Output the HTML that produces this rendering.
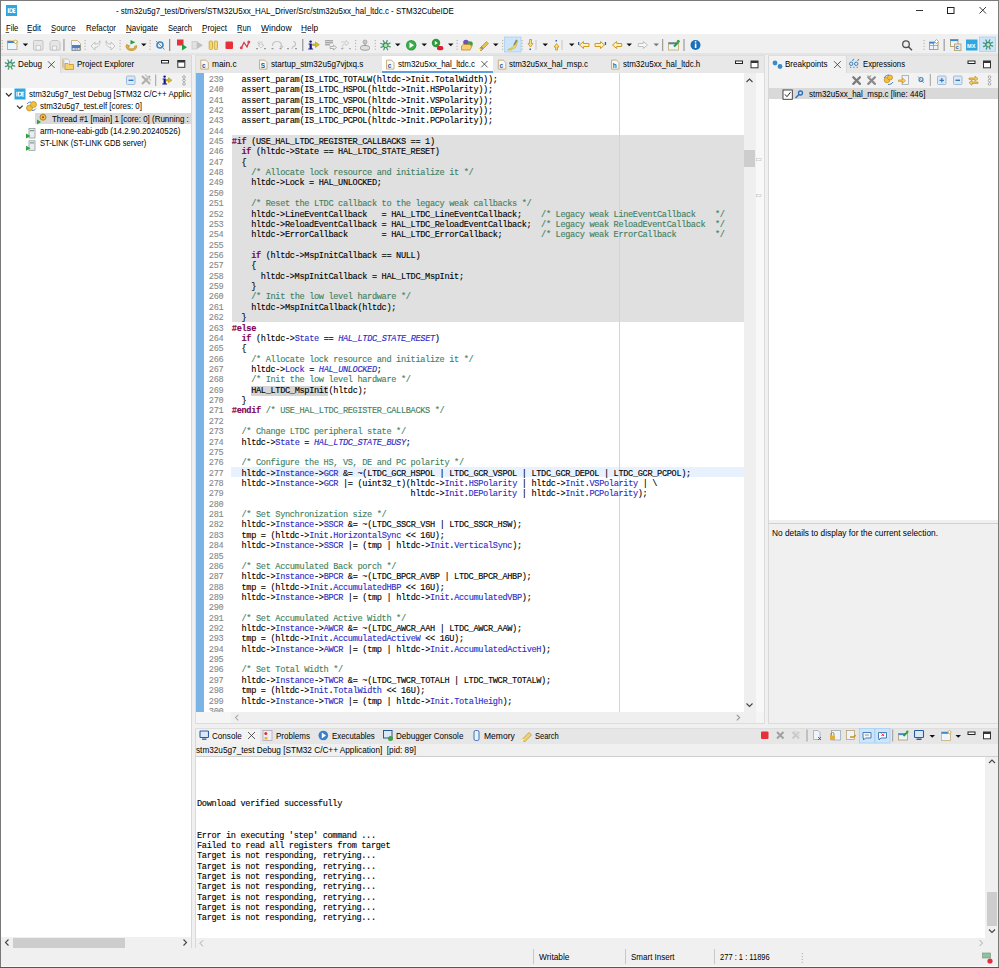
<!DOCTYPE html><html><head><meta charset="utf-8"><style>
html,body{margin:0;padding:0;}
body{width:999px;height:968px;overflow:hidden;position:relative;background:#f0f0f0;font-family:"Liberation Sans",sans-serif;}
.t{position:absolute;white-space:pre;line-height:1;transform-origin:0 0;}
.clip{position:absolute;overflow:hidden;}
.code{position:absolute;white-space:pre;font-family:"Liberation Mono",monospace;font-size:8.6px;letter-spacing:-0.325px;line-height:10.363px;color:#000;-webkit-text-stroke:0.12px currentColor;}
.k{color:#7f0055;font-weight:bold}
.c{color:#3f7f5f}
.f{color:#2c2cc8}
.e{color:#2c2cc8;font-style:italic}
svg.ov{position:absolute;left:0;top:0;}
</style></head><body>

<div style="position:absolute;left:0px;top:0px;width:999px;height:20px;background:#fff;"></div>
<div style="position:absolute;left:0px;top:20px;width:999px;height:13.5px;background:#fff;"></div>
<div style="position:absolute;left:0px;top:33.5px;width:999px;height:19.5px;background:#f0f0f0;"></div>
<div style="position:absolute;left:0px;top:53px;width:999px;height:2px;background:#e4e4e4;"></div>
<div style="position:absolute;left:1px;top:55px;width:191px;height:17.5px;background:#e6e6e6;"></div>
<div style="position:absolute;left:60px;top:55px;width:132px;height:17.5px;background:#e6e6e6;border-left:1px solid #dadada;box-sizing:border-box;"></div>
<div style="position:absolute;left:1px;top:55px;width:59px;height:17.5px;background:#f2f2f2;"></div>
<div style="position:absolute;left:1px;top:72.5px;width:191px;height:15.5px;background:#f2f2f2;"></div>
<div style="position:absolute;left:1px;top:88px;width:190px;height:849px;background:#fff;"></div>
<div style="position:absolute;left:191px;top:55px;width:1px;height:893px;background:#d8d8d8;"></div>
<div style="position:absolute;left:192px;top:55px;width:3px;height:893px;background:#f0f0f0;"></div>
<div style="position:absolute;left:35.2px;top:113.2px;width:155.8px;height:11.1px;background:#d9d9d9;"></div>
<div style="position:absolute;left:1px;top:937.4px;width:190px;height:10.6px;background:#f0f0f0;"></div>
<div style="position:absolute;left:13.2px;top:937.8px;width:112px;height:9.8px;background:#cdcdcd;"></div>
<div style="position:absolute;left:195px;top:55px;width:570px;height:17.5px;background:#e8e8e8;"></div>
<div style="position:absolute;left:381.5px;top:55px;width:111.5px;height:17.5px;background:#fff;"></div>
<div style="position:absolute;left:381.5px;top:70.8px;width:111.5px;height:1.8px;background:#5c9ee0;"></div>
<div style="position:absolute;left:195px;top:72.5px;width:569px;height:639px;background:#fff;"></div>
<div style="position:absolute;left:196px;top:72.5px;width:8px;height:639px;background:#7ab3e6;"></div>
<div class="clip" style="left:195px;top:72.5px;width:549px;height:639px">
<div style="position:absolute;left:36.70000000000002px;top:62.47800000000001px;width:512.1999999999999px;height:186.534px;background:#e0e0e0;"></div>
<div style="position:absolute;left:36.30000000000001px;top:394.094px;width:512.5999999999999px;height:10.363px;background:#e8f2fe;"></div>
<div style="position:absolute;left:424px;top:0.0px;width:1px;height:639px;background:#d4d4d4;"></div>
<div class="code" style="left:13.800000000000011px;top:2.30px;color:#8a8a8a">239</div>
<div class="code" style="left:36.80000000000001px;top:2.30px">  assert_param(IS_LTDC_TOTALW(hltdc-&gt;Init.TotalWidth));</div>
<div class="code" style="left:13.800000000000011px;top:12.66px;color:#8a8a8a">240</div>
<div class="code" style="left:36.80000000000001px;top:12.66px">  assert_param(IS_LTDC_HSPOL(hltdc-&gt;Init.HSPolarity));</div>
<div class="code" style="left:13.800000000000011px;top:23.03px;color:#8a8a8a">241</div>
<div class="code" style="left:36.80000000000001px;top:23.03px">  assert_param(IS_LTDC_VSPOL(hltdc-&gt;Init.VSPolarity));</div>
<div class="code" style="left:13.800000000000011px;top:33.39px;color:#8a8a8a">242</div>
<div class="code" style="left:36.80000000000001px;top:33.39px">  assert_param(IS_LTDC_DEPOL(hltdc-&gt;Init.DEPolarity));</div>
<div class="code" style="left:13.800000000000011px;top:43.75px;color:#8a8a8a">243</div>
<div class="code" style="left:36.80000000000001px;top:43.75px">  assert_param(IS_LTDC_PCPOL(hltdc-&gt;Init.PCPolarity));</div>
<div class="code" style="left:13.800000000000011px;top:54.11px;color:#8a8a8a">244</div>
<div class="code" style="left:13.800000000000011px;top:64.48px;color:#8a8a8a">245</div>
<div class="code" style="left:36.80000000000001px;top:64.48px"><span class="k">#if</span> (USE_HAL_LTDC_REGISTER_CALLBACKS == 1)</div>
<div class="code" style="left:13.800000000000011px;top:74.84px;color:#8a8a8a">246</div>
<div class="code" style="left:36.80000000000001px;top:74.84px">  <span class="k">if</span> (hltdc-&gt;State == HAL_LTDC_STATE_RESET)</div>
<div class="code" style="left:13.800000000000011px;top:85.20px;color:#8a8a8a">247</div>
<div class="code" style="left:36.80000000000001px;top:85.20px">  {</div>
<div class="code" style="left:13.800000000000011px;top:95.57px;color:#8a8a8a">248</div>
<div class="code" style="left:36.80000000000001px;top:95.57px">    <span class="c">/* Allocate lock resource and initialize it */</span></div>
<div class="code" style="left:13.800000000000011px;top:105.93px;color:#8a8a8a">249</div>
<div class="code" style="left:36.80000000000001px;top:105.93px">    hltdc-&gt;Lock = HAL_UNLOCKED;</div>
<div class="code" style="left:13.800000000000011px;top:116.29px;color:#8a8a8a">250</div>
<div class="code" style="left:13.800000000000011px;top:126.66px;color:#8a8a8a">251</div>
<div class="code" style="left:36.80000000000001px;top:126.66px">    <span class="c">/* Reset the LTDC callback to the legacy weak callbacks */</span></div>
<div class="code" style="left:13.800000000000011px;top:137.02px;color:#8a8a8a">252</div>
<div class="code" style="left:36.80000000000001px;top:137.02px">    hltdc-&gt;LineEventCallback   = HAL_LTDC_LineEventCallback;    <span class="c">/* Legacy weak LineEventCallback    */</span></div>
<div class="code" style="left:13.800000000000011px;top:147.38px;color:#8a8a8a">253</div>
<div class="code" style="left:36.80000000000001px;top:147.38px">    hltdc-&gt;ReloadEventCallback = HAL_LTDC_ReloadEventCallback;  <span class="c">/* Legacy weak ReloadEventCallback  */</span></div>
<div class="code" style="left:13.800000000000011px;top:157.74px;color:#8a8a8a">254</div>
<div class="code" style="left:36.80000000000001px;top:157.74px">    hltdc-&gt;ErrorCallback       = HAL_LTDC_ErrorCallback;        <span class="c">/* Legacy weak ErrorCallback        */</span></div>
<div class="code" style="left:13.800000000000011px;top:168.11px;color:#8a8a8a">255</div>
<div class="code" style="left:13.800000000000011px;top:178.47px;color:#8a8a8a">256</div>
<div class="code" style="left:36.80000000000001px;top:178.47px">    <span class="k">if</span> (hltdc-&gt;MspInitCallback == NULL)</div>
<div class="code" style="left:13.800000000000011px;top:188.83px;color:#8a8a8a">257</div>
<div class="code" style="left:36.80000000000001px;top:188.83px">    {</div>
<div class="code" style="left:13.800000000000011px;top:199.20px;color:#8a8a8a">258</div>
<div class="code" style="left:36.80000000000001px;top:199.20px">      hltdc-&gt;MspInitCallback = HAL_LTDC_MspInit;</div>
<div class="code" style="left:13.800000000000011px;top:209.56px;color:#8a8a8a">259</div>
<div class="code" style="left:36.80000000000001px;top:209.56px">    }</div>
<div class="code" style="left:13.800000000000011px;top:219.92px;color:#8a8a8a">260</div>
<div class="code" style="left:36.80000000000001px;top:219.92px">    <span class="c">/* Init the low level hardware */</span></div>
<div class="code" style="left:13.800000000000011px;top:230.29px;color:#8a8a8a">261</div>
<div class="code" style="left:36.80000000000001px;top:230.29px">    hltdc-&gt;MspInitCallback(hltdc);</div>
<div class="code" style="left:13.800000000000011px;top:240.65px;color:#8a8a8a">262</div>
<div class="code" style="left:36.80000000000001px;top:240.65px">  }</div>
<div class="code" style="left:13.800000000000011px;top:251.01px;color:#8a8a8a">263</div>
<div class="code" style="left:36.80000000000001px;top:251.01px"><span class="k">#else</span></div>
<div class="code" style="left:13.800000000000011px;top:261.38px;color:#8a8a8a">264</div>
<div class="code" style="left:36.80000000000001px;top:261.38px">  <span class="k">if</span> (hltdc-&gt;<span class="f">State</span> == <span class="e">HAL_LTDC_STATE_RESET</span>)</div>
<div class="code" style="left:13.800000000000011px;top:271.74px;color:#8a8a8a">265</div>
<div class="code" style="left:36.80000000000001px;top:271.74px">  {</div>
<div class="code" style="left:13.800000000000011px;top:282.10px;color:#8a8a8a">266</div>
<div class="code" style="left:36.80000000000001px;top:282.10px">    <span class="c">/* Allocate lock resource and initialize it */</span></div>
<div class="code" style="left:13.800000000000011px;top:292.46px;color:#8a8a8a">267</div>
<div class="code" style="left:36.80000000000001px;top:292.46px">    hltdc-&gt;<span class="f">Lock</span> = <span class="e">HAL_UNLOCKED</span>;</div>
<div class="code" style="left:13.800000000000011px;top:302.83px;color:#8a8a8a">268</div>
<div class="code" style="left:36.80000000000001px;top:302.83px">    <span class="c">/* Init the low level hardware */</span></div>
<div class="code" style="left:13.800000000000011px;top:313.19px;color:#8a8a8a">269</div>
<div class="code" style="left:36.80000000000001px;top:313.19px">    <span style="background:#d4d4d4">HAL_LTDC_MspInit</span>(hltdc);</div>
<div class="code" style="left:13.800000000000011px;top:323.55px;color:#8a8a8a">270</div>
<div class="code" style="left:36.80000000000001px;top:323.55px">  }</div>
<div class="code" style="left:13.800000000000011px;top:333.92px;color:#8a8a8a">271</div>
<div class="code" style="left:36.80000000000001px;top:333.92px"><span class="k">#endif</span> <span class="c">/* USE_HAL_LTDC_REGISTER_CALLBACKS */</span></div>
<div class="code" style="left:13.800000000000011px;top:344.28px;color:#8a8a8a">272</div>
<div class="code" style="left:13.800000000000011px;top:354.64px;color:#8a8a8a">273</div>
<div class="code" style="left:36.80000000000001px;top:354.64px">  <span class="c">/* Change LTDC peripheral state */</span></div>
<div class="code" style="left:13.800000000000011px;top:365.00px;color:#8a8a8a">274</div>
<div class="code" style="left:36.80000000000001px;top:365.00px">  hltdc-&gt;<span class="f">State</span> = <span class="e">HAL_LTDC_STATE_BUSY</span>;</div>
<div class="code" style="left:13.800000000000011px;top:375.37px;color:#8a8a8a">275</div>
<div class="code" style="left:13.800000000000011px;top:385.73px;color:#8a8a8a">276</div>
<div class="code" style="left:36.80000000000001px;top:385.73px">  <span class="c">/* Configure the HS, VS, DE and PC polarity */</span></div>
<div class="code" style="left:13.800000000000011px;top:396.09px;color:#8a8a8a">277</div>
<div class="code" style="left:36.80000000000001px;top:396.09px">  hltdc-&gt;<span class="f">Instance</span>-&gt;<span class="f">GCR</span> &amp;= ~(LTDC_GCR_HSPOL | LTDC_GCR_VSPOL | LTDC_GCR_DEPOL | LTDC_GCR_PCPOL);</div>
<div class="code" style="left:13.800000000000011px;top:406.46px;color:#8a8a8a">278</div>
<div class="code" style="left:36.80000000000001px;top:406.46px">  hltdc-&gt;<span class="f">Instance</span>-&gt;<span class="f">GCR</span> |= (uint32_t)(hltdc-&gt;<span class="f">Init</span>.<span class="f">HSPolarity</span> | hltdc-&gt;<span class="f">Init</span>.<span class="f">VSPolarity</span> | \</div>
<div class="code" style="left:13.800000000000011px;top:416.82px;color:#8a8a8a">279</div>
<div class="code" style="left:36.80000000000001px;top:416.82px">                                     hltdc-&gt;<span class="f">Init</span>.<span class="f">DEPolarity</span> | hltdc-&gt;<span class="f">Init</span>.<span class="f">PCPolarity</span>);</div>
<div class="code" style="left:13.800000000000011px;top:427.18px;color:#8a8a8a">280</div>
<div class="code" style="left:13.800000000000011px;top:437.55px;color:#8a8a8a">281</div>
<div class="code" style="left:36.80000000000001px;top:437.55px">  <span class="c">/* Set Synchronization size */</span></div>
<div class="code" style="left:13.800000000000011px;top:447.91px;color:#8a8a8a">282</div>
<div class="code" style="left:36.80000000000001px;top:447.91px">  hltdc-&gt;<span class="f">Instance</span>-&gt;<span class="f">SSCR</span> &amp;= ~(LTDC_SSCR_VSH | LTDC_SSCR_HSW);</div>
<div class="code" style="left:13.800000000000011px;top:458.27px;color:#8a8a8a">283</div>
<div class="code" style="left:36.80000000000001px;top:458.27px">  tmp = (hltdc-&gt;<span class="f">Init</span>.<span class="f">HorizontalSync</span> &lt;&lt; 16U);</div>
<div class="code" style="left:13.800000000000011px;top:468.63px;color:#8a8a8a">284</div>
<div class="code" style="left:36.80000000000001px;top:468.63px">  hltdc-&gt;<span class="f">Instance</span>-&gt;<span class="f">SSCR</span> |= (tmp | hltdc-&gt;<span class="f">Init</span>.<span class="f">VerticalSync</span>);</div>
<div class="code" style="left:13.800000000000011px;top:479.00px;color:#8a8a8a">285</div>
<div class="code" style="left:13.800000000000011px;top:489.36px;color:#8a8a8a">286</div>
<div class="code" style="left:36.80000000000001px;top:489.36px">  <span class="c">/* Set Accumulated Back porch */</span></div>
<div class="code" style="left:13.800000000000011px;top:499.72px;color:#8a8a8a">287</div>
<div class="code" style="left:36.80000000000001px;top:499.72px">  hltdc-&gt;<span class="f">Instance</span>-&gt;<span class="f">BPCR</span> &amp;= ~(LTDC_BPCR_AVBP | LTDC_BPCR_AHBP);</div>
<div class="code" style="left:13.800000000000011px;top:510.09px;color:#8a8a8a">288</div>
<div class="code" style="left:36.80000000000001px;top:510.09px">  tmp = (hltdc-&gt;<span class="f">Init</span>.<span class="f">AccumulatedHBP</span> &lt;&lt; 16U);</div>
<div class="code" style="left:13.800000000000011px;top:520.45px;color:#8a8a8a">289</div>
<div class="code" style="left:36.80000000000001px;top:520.45px">  hltdc-&gt;<span class="f">Instance</span>-&gt;<span class="f">BPCR</span> |= (tmp | hltdc-&gt;<span class="f">Init</span>.<span class="f">AccumulatedVBP</span>);</div>
<div class="code" style="left:13.800000000000011px;top:530.81px;color:#8a8a8a">290</div>
<div class="code" style="left:13.800000000000011px;top:541.18px;color:#8a8a8a">291</div>
<div class="code" style="left:36.80000000000001px;top:541.18px">  <span class="c">/* Set Accumulated Active Width */</span></div>
<div class="code" style="left:13.800000000000011px;top:551.54px;color:#8a8a8a">292</div>
<div class="code" style="left:36.80000000000001px;top:551.54px">  hltdc-&gt;<span class="f">Instance</span>-&gt;<span class="f">AWCR</span> &amp;= ~(LTDC_AWCR_AAH | LTDC_AWCR_AAW);</div>
<div class="code" style="left:13.800000000000011px;top:561.90px;color:#8a8a8a">293</div>
<div class="code" style="left:36.80000000000001px;top:561.90px">  tmp = (hltdc-&gt;<span class="f">Init</span>.<span class="f">AccumulatedActiveW</span> &lt;&lt; 16U);</div>
<div class="code" style="left:13.800000000000011px;top:572.26px;color:#8a8a8a">294</div>
<div class="code" style="left:36.80000000000001px;top:572.26px">  hltdc-&gt;<span class="f">Instance</span>-&gt;<span class="f">AWCR</span> |= (tmp | hltdc-&gt;<span class="f">Init</span>.<span class="f">AccumulatedActiveH</span>);</div>
<div class="code" style="left:13.800000000000011px;top:582.63px;color:#8a8a8a">295</div>
<div class="code" style="left:13.800000000000011px;top:592.99px;color:#8a8a8a">296</div>
<div class="code" style="left:36.80000000000001px;top:592.99px">  <span class="c">/* Set Total Width */</span></div>
<div class="code" style="left:13.800000000000011px;top:603.35px;color:#8a8a8a">297</div>
<div class="code" style="left:36.80000000000001px;top:603.35px">  hltdc-&gt;<span class="f">Instance</span>-&gt;<span class="f">TWCR</span> &amp;= ~(LTDC_TWCR_TOTALH | LTDC_TWCR_TOTALW);</div>
<div class="code" style="left:13.800000000000011px;top:613.72px;color:#8a8a8a">298</div>
<div class="code" style="left:36.80000000000001px;top:613.72px">  tmp = (hltdc-&gt;<span class="f">Init</span>.<span class="f">TotalWidth</span> &lt;&lt; 16U);</div>
<div class="code" style="left:13.800000000000011px;top:624.08px;color:#8a8a8a">299</div>
<div class="code" style="left:36.80000000000001px;top:624.08px">  hltdc-&gt;<span class="f">Instance</span>-&gt;<span class="f">TWCR</span> |= (tmp | hltdc-&gt;<span class="f">Init</span>.<span class="f">TotalHeigh</span>);</div>
<div class="code" style="left:13.800000000000011px;top:634.44px;color:#8a8a8a">300</div>
</div>
<div style="position:absolute;left:744px;top:72.5px;width:11.6px;height:639px;background:#efefef;"></div>
<div style="position:absolute;left:755.6px;top:72.5px;width:8.6px;height:639px;background:#f8f8f8;"></div>
<div style="position:absolute;left:744.3px;top:150.3px;width:10.8px;height:17px;background:#cdcdcd;"></div>
<div style="position:absolute;left:764.2px;top:55px;width:1px;height:668px;background:#dcdcdc;"></div>
<div style="position:absolute;left:195px;top:711.5px;width:569px;height:11.5px;background:#f5f5f5;"></div>
<div style="position:absolute;left:230.5px;top:711.5px;width:525px;height:11.5px;background:#efefef;"></div>
<div style="position:absolute;left:195px;top:723px;width:570px;height:1px;background:#dcdcdc;"></div>
<div style="position:absolute;left:765.2px;top:55px;width:3px;height:668px;background:#f0f0f0;"></div>
<div style="position:absolute;left:768.3px;top:55px;width:229.7px;height:17.5px;background:#e6e6e6;"></div>
<div style="position:absolute;left:846px;top:55px;width:152px;height:17.5px;background:#e6e6e6;border-left:1px solid #dadada;box-sizing:border-box;"></div>
<div style="position:absolute;left:768.3px;top:55px;width:77.7px;height:17.5px;background:#f2f2f2;"></div>
<div style="position:absolute;left:768.3px;top:72.5px;width:229.7px;height:15.7px;background:#f2f2f2;"></div>
<div style="position:absolute;left:768.3px;top:88.2px;width:229.7px;height:432px;background:#fff;"></div>
<div style="position:absolute;left:768.3px;top:88.2px;width:229.7px;height:10.8px;background:#d9d9d9;"></div>
<div style="position:absolute;left:768.3px;top:523px;width:229.7px;height:1px;background:#d0d0d0;"></div>
<div style="position:absolute;left:768.3px;top:524px;width:229.7px;height:199px;background:#f0f0f0;"></div>
<div style="position:absolute;left:768px;top:55px;width:1px;height:669px;background:#d8d8d8;"></div>
<div style="position:absolute;left:768px;top:723px;width:230px;height:1px;background:#dcdcdc;"></div>
<div style="position:absolute;left:195px;top:727.7px;width:803px;height:16.2px;background:#e6e6e6;"></div>
<div style="position:absolute;left:195px;top:727.7px;width:65px;height:16.2px;background:#f2f2f2;"></div>
<div style="position:absolute;left:195px;top:743.9px;width:803px;height:11.7px;background:#f0f0f0;"></div>
<div style="position:absolute;left:195px;top:755.6px;width:803px;height:1px;background:#cfcfcf;"></div>
<div style="position:absolute;left:195px;top:756.6px;width:790px;height:181px;background:#fff;"></div>
<div style="position:absolute;left:985px;top:756.6px;width:12px;height:181px;background:#f0f0f0;"></div>
<div style="position:absolute;left:986.7px;top:892.3px;width:10.5px;height:33.4px;background:#cdcdcd;"></div>
<div style="position:absolute;left:195px;top:937.7px;width:803px;height:10.3px;background:#f0f0f0;"></div>
<div class="code" style="left:197px;top:799.45px">Download verified successfully</div>
<div class="code" style="left:197px;top:830.54px">Error in executing &#x27;step&#x27; command ...</div>
<div class="code" style="left:197px;top:840.90px">Failed to read all registers from target</div>
<div class="code" style="left:197px;top:851.27px">Target is not responding, retrying...</div>
<div class="code" style="left:197px;top:861.63px">Target is not responding, retrying...</div>
<div class="code" style="left:197px;top:871.99px">Target is not responding, retrying...</div>
<div class="code" style="left:197px;top:882.36px">Target is not responding, retrying...</div>
<div class="code" style="left:197px;top:892.72px">Target is not responding, retrying...</div>
<div class="code" style="left:197px;top:903.08px">Target is not responding, retrying...</div>
<div class="code" style="left:197px;top:913.44px">Target is not responding, retrying...</div>
<div style="position:absolute;left:195px;top:727.7px;width:1px;height:220.3px;background:#d8d8d8;"></div>
<div style="position:absolute;left:195px;top:55px;width:1px;height:668px;background:#dedede;"></div>
<div style="position:absolute;left:1px;top:55px;width:191px;height:1px;background:#dedede;"></div>
<div style="position:absolute;left:195px;top:55px;width:570px;height:1px;background:#dedede;"></div>
<div style="position:absolute;left:768px;top:55px;width:230px;height:1px;background:#dedede;"></div>
<div style="position:absolute;left:195px;top:727.5px;width:803px;height:1px;background:#dedede;"></div>
<div style="position:absolute;left:1px;top:948px;width:997px;height:18px;background:#f0f0f0;"></div>
<div style="position:absolute;left:533px;top:949px;width:1px;height:15px;background:#c8c8c8;"></div>
<div style="position:absolute;left:625px;top:949px;width:1px;height:15px;background:#c8c8c8;"></div>
<div style="position:absolute;left:714.2px;top:949px;width:1px;height:15px;background:#c8c8c8;"></div>
<div class="t" style="left:115.70px;top:7.42px;font-size:8.6px;color:#000;transform:scaleX(0.9245);">- stm32u5g7_test/Drivers/STM32U5xx_HAL_Driver/Src/stm32u5xx_hal_ltdc.c - STM32CubeIDE</div>
<div class="t" style="left:5.60px;top:23.76px;font-size:8.8px;color:#000;transform:scaleX(0.8740);">File</div>
<div class="t" style="left:27.40px;top:23.76px;font-size:8.8px;color:#000;transform:scaleX(0.9294);">Edit</div>
<div class="t" style="left:51.30px;top:23.76px;font-size:8.8px;color:#000;transform:scaleX(0.8861);">Source</div>
<div class="t" style="left:86.00px;top:23.76px;font-size:8.8px;color:#000;transform:scaleX(0.9023);">Refactor</div>
<div class="t" style="left:126.00px;top:23.76px;font-size:8.8px;color:#000;transform:scaleX(0.9213);">Navigate</div>
<div class="t" style="left:168.00px;top:23.76px;font-size:8.8px;color:#000;transform:scaleX(0.8610);">Search</div>
<div class="t" style="left:201.90px;top:23.76px;font-size:8.8px;color:#000;transform:scaleX(0.9164);">Project</div>
<div class="t" style="left:237.40px;top:23.76px;font-size:8.8px;color:#000;transform:scaleX(0.8612);">Run</div>
<div class="t" style="left:261.20px;top:23.76px;font-size:8.8px;color:#000;transform:scaleX(0.9777);">Window</div>
<div class="t" style="left:301.40px;top:23.76px;font-size:8.8px;color:#000;transform:scaleX(0.9451);">Help</div>
<div class="t" style="left:17.60px;top:60.26px;font-size:8.8px;color:#000;transform:scaleX(0.9292);">Debug</div>
<div class="t" style="left:76.70px;top:60.26px;font-size:8.8px;color:#000;transform:scaleX(0.9154);">Project Explorer</div>
<div class="clip" style="left:1px;top:88px;width:190px;height:849px"><div class="t" style="left:27.70px;top:1.76px;font-size:8.8px;color:#000;transform:scaleX(0.9050);">stm32u5g7_test Debug [STM32 C/C++ Application]</div></div>
<div class="t" style="left:40.30px;top:102.16px;font-size:8.8px;color:#000;transform:scaleX(0.9029);">stm32u5g7_test.elf [cores: 0]</div>
<div class="clip" style="left:1px;top:88px;width:190px;height:849px"><div class="t" style="left:50.90px;top:26.56px;font-size:8.8px;color:#000;transform:scaleX(0.9050);">Thread #1 [main] 1 [core: 0] (Running : Step)</div></div>
<div class="t" style="left:40.30px;top:126.96px;font-size:8.8px;color:#000;transform:scaleX(0.9107);">arm-none-eabi-gdb (14.2.90.20240526)</div>
<div class="t" style="left:40.30px;top:139.36px;font-size:8.8px;color:#000;transform:scaleX(0.8629);">ST-LINK (ST-LINK GDB server)</div>
<div class="t" style="left:212.00px;top:60.26px;font-size:8.8px;color:#000;transform:scaleX(0.9490);">main.c</div>
<div class="t" style="left:270.60px;top:60.26px;font-size:8.8px;color:#000;transform:scaleX(0.9217);">startup_stm32u5g7vjtxq.s</div>
<div class="t" style="left:397.70px;top:60.26px;font-size:8.8px;color:#000;transform:scaleX(0.9102);">stm32u5xx_hal_ltdc.c</div>
<div class="t" style="left:509.00px;top:60.26px;font-size:8.8px;color:#000;transform:scaleX(0.9025);">stm32u5xx_hal_msp.c</div>
<div class="t" style="left:623.00px;top:60.26px;font-size:8.8px;color:#000;transform:scaleX(0.9084);">stm32u5xx_hal_ltdc.h</div>
<div class="t" style="left:785.30px;top:60.16px;font-size:8.8px;color:#000;transform:scaleX(0.9146);">Breakpoints</div>
<div class="t" style="left:862.60px;top:60.16px;font-size:8.8px;color:#000;transform:scaleX(0.8764);">Expressions</div>
<div class="t" style="left:808.80px;top:89.76px;font-size:8.8px;color:#000;transform:scaleX(0.9093);">stm32u5xx_hal_msp.c [line: 446]</div>
<div class="t" style="left:772.00px;top:529.46px;font-size:8.8px;color:#000;transform:scaleX(0.9456);">No details to display for the current selection.</div>
<div class="t" style="left:212.10px;top:731.96px;font-size:8.8px;color:#000;transform:scaleX(0.9200);">Console</div>
<div class="t" style="left:276.40px;top:731.96px;font-size:8.8px;color:#000;transform:scaleX(0.9124);">Problems</div>
<div class="t" style="left:331.60px;top:731.96px;font-size:8.8px;color:#000;transform:scaleX(0.8928);">Executables</div>
<div class="t" style="left:395.60px;top:731.96px;font-size:8.8px;color:#000;transform:scaleX(0.9188);">Debugger Console</div>
<div class="t" style="left:483.60px;top:731.96px;font-size:8.8px;color:#000;transform:scaleX(0.9691);">Memory</div>
<div class="t" style="left:534.60px;top:731.96px;font-size:8.8px;color:#000;transform:scaleX(0.8538);">Search</div>
<div class="t" style="left:196.00px;top:745.86px;font-size:8.8px;color:#000;transform:scaleX(0.9334);">stm32u5g7_test Debug [STM32 C/C++ Application]  [pid: 89]</div>
<div class="t" style="left:538.50px;top:952.76px;font-size:8.8px;color:#000;transform:scaleX(0.9499);">Writable</div>
<div class="t" style="left:631.20px;top:952.76px;font-size:8.8px;color:#000;transform:scaleX(0.9101);">Smart Insert</div>
<div class="t" style="left:719.70px;top:952.76px;font-size:8.8px;color:#000;transform:scaleX(0.8562);">277 : 1 : 11896</div>
<svg class="ov" width="999" height="968" viewBox="0 0 999 968"><path d="M916 10.5H923" stroke="#333" stroke-width="1"/><rect x="947.5" y="7.5" width="6.5" height="6" fill="none" stroke="#222" stroke-width="1"/><path d="M979.5 7L986 13.5M986 7L979.5 13.5" stroke="#222" stroke-width="0.9"/><rect x="6" y="5" width="11" height="11" fill="#2ea7e0"/><rect x="7.8" y="8.2" width="1.1" height="4.8" fill="#fff"/><path d="M9.9 8.75h1.3a1.85 1.85 0 0 1 0 3.6999999999999997h-1.3z" fill="none" stroke="#fff" stroke-width="1.1"/><path d="M15.6 8.75h-2.2v3.6999999999999997h2.2M13.4 10.6h1.9" fill="none" stroke="#fff" stroke-width="1.05"/><rect x="5.6" y="32" width="3.5" height="0.8" fill="#333"/><rect x="27.4" y="32" width="4" height="0.8" fill="#333"/><rect x="51.3" y="32" width="4" height="0.8" fill="#333"/><rect x="126" y="32" width="5" height="0.8" fill="#333"/><rect x="176" y="32" width="3.5" height="0.8" fill="#333"/><rect x="201.9" y="32" width="4.5" height="0.8" fill="#333"/><rect x="237.4" y="32" width="4.5" height="0.8" fill="#333"/><rect x="261.2" y="32" width="6.5" height="0.8" fill="#333"/><rect x="301.4" y="32" width="4.5" height="0.8" fill="#333"/><rect x="108" y="32" width="3" height="0.8" fill="#333"/><rect x="1.7000000000000002" y="40.0" width="1.2" height="1.1" fill="#b8a48a" opacity="0.8"/><rect x="1.7000000000000002" y="42.9" width="1.2" height="1.1" fill="#b8a48a" opacity="0.8"/><rect x="1.7000000000000002" y="45.8" width="1.2" height="1.1" fill="#b8a48a" opacity="0.8"/><rect x="1.7000000000000002" y="48.7" width="1.2" height="1.1" fill="#b8a48a" opacity="0.8"/><rect x="7.5" y="41" width="9.5" height="8.5" fill="#eef6fc" stroke="#c8b070" stroke-width="1"/><rect x="7.5" y="41" width="8" height="2" fill="#3d86d0"/><path d="M15.5 39.8l2 2l-2 2l-2-2z" fill="#fff" stroke="#c09a30" stroke-width="0.9"/><path d="M22.7 43.5h5.5l-2.75 2.7z" fill="#111"/><rect x="33.5" y="40.5" width="9.5" height="9.5" rx="1" fill="#e6e6e6" stroke="#c4c4c4" stroke-width="1"/><rect x="36" y="45.5" width="4.5" height="4.5" fill="#f4f4f4" stroke="#c4c4c4" stroke-width="0.8"/><path d="M50 42.5l2-2h6l2 2v7.5h-10z" fill="#e6e6e6" stroke="#c4c4c4" stroke-width="1"/><rect x="52.5" y="46" width="4" height="4" fill="#f4f4f4" stroke="#c4c4c4" stroke-width="0.8"/><rect x="63.2" y="39" width="1.5" height="12" fill="#b0b0b0"/><path d="M71.5 40.5h6l3 3v7h-9z" fill="#f4f8fc" stroke="#c8b070" stroke-width="0.9"/><rect x="72" y="45" width="8.5" height="5.5" fill="#4f7fc0"/><text x="72.2" y="49.6" font-family="Liberation Mono" font-size="4.2" font-weight="bold" fill="#fff">010</text><rect x="84.5" y="40.0" width="1.2" height="1.1" fill="#b8a48a" opacity="0.8"/><rect x="84.5" y="42.9" width="1.2" height="1.1" fill="#b8a48a" opacity="0.8"/><rect x="84.5" y="45.8" width="1.2" height="1.1" fill="#b8a48a" opacity="0.8"/><rect x="84.5" y="48.7" width="1.2" height="1.1" fill="#b8a48a" opacity="0.8"/><path d="M91 46l4-4v2.2c2.5 0 4.5-1 4.8-3.5c0.8 3.5-1.5 6.8-4.8 6.8v2.5z" fill="#f4f4f4" stroke="#bcbcbc" stroke-width="0.9"/><path d="M115 46l-4-4v2.2c-2.5 0-4.5-1-4.8-3.5c-0.8 3.5 1.5 6.8 4.8 6.8v2.5z" fill="#f4f4f4" stroke="#bcbcbc" stroke-width="0.9"/><rect x="119.5" y="40.0" width="1.2" height="1.1" fill="#b8a48a" opacity="0.8"/><rect x="119.5" y="42.9" width="1.2" height="1.1" fill="#b8a48a" opacity="0.8"/><rect x="119.5" y="45.8" width="1.2" height="1.1" fill="#b8a48a" opacity="0.8"/><rect x="119.5" y="48.7" width="1.2" height="1.1" fill="#b8a48a" opacity="0.8"/><path d="M126 46.5c0.5 3 3 4.2 6 4c3.5-0.3 5.2-2.5 4.5-5l-2 1c0.3 1.5-1 2.3-2.8 2.3c-2 0-3-0.8-3.2-2.3l1.2-0.5l-3-1.5z" fill="#e0b040" stroke="#b88a20" stroke-width="0.7"/><path d="M130.5 40v4.5l4.8-2.25z" fill="#20a040"/><path d="M141 43.5h5.5l-2.75 2.7z" fill="#111"/><rect x="149.5" y="40.0" width="1.2" height="1.1" fill="#b8a48a" opacity="0.8"/><rect x="149.5" y="42.9" width="1.2" height="1.1" fill="#b8a48a" opacity="0.8"/><rect x="149.5" y="45.8" width="1.2" height="1.1" fill="#b8a48a" opacity="0.8"/><rect x="149.5" y="48.7" width="1.2" height="1.1" fill="#b8a48a" opacity="0.8"/><circle cx="160" cy="45" r="3" fill="none" stroke="#3a88c8" stroke-width="1.6"/><path d="M156 41L164.5 49.5" stroke="#888" stroke-width="1"/><rect x="169.2" y="39" width="1" height="12" fill="#777"/><rect x="177" y="39.5" width="6.5" height="6" fill="#e8303a"/><path d="M182 44v6.5l5-3.25z" fill="#20a040"/><rect x="192" y="41.5" width="5" height="7.5" fill="#e2e2e2" stroke="#c8c8c8" stroke-width="0.8"/><path d="M197 41.5v7.5l6-3.75z" fill="#c0c0c0"/><rect x="209.2" y="41" width="3.3" height="8.5" rx="1" fill="#f3d878" stroke="#c9a030" stroke-width="0.8"/><rect x="214.2" y="41" width="3.3" height="8.5" rx="1" fill="#f3d878" stroke="#c9a030" stroke-width="0.8"/><rect x="225.5" y="41.5" width="7.5" height="7.5" rx="1" fill="#e8303a"/><path d="M241.5 47.5L244 42.5L247 47L248.8 42.2" fill="none" stroke="#d83040" stroke-width="1.2"/><circle cx="241.3" cy="47.8" r="1.5" fill="#e84050"/><circle cx="248.8" cy="42" r="1.5" fill="#e84050"/><rect x="256" y="48.3" width="2" height="0.9" fill="#7a7a7a"/><rect x="264" y="48.3" width="2" height="0.9" fill="#7a7a7a"/><rect x="271.5" y="48.3" width="2" height="0.9" fill="#7a7a7a"/><rect x="279.5" y="48.3" width="2" height="0.9" fill="#7a7a7a"/><rect x="287" y="48.3" width="2" height="0.9" fill="#7a7a7a"/><rect x="295" y="48.3" width="2" height="0.9" fill="#7a7a7a"/><path d="M258 42h4v3h2l-3 3l-3-3h2v-1.5h-2z" fill="#f2f2f2" stroke="#c4c4c4" stroke-width="0.8"/><path d="M272.5 46c0-3 2-4.5 4.5-4.5s4.5 1.5 4.5 4.5M280 46l1.5 1.8l1.5-1.8" fill="none" stroke="#c4c4c4" stroke-width="1.2"/><path d="M293 41.5a2.5 2.5 0 1 1 0 5l-1.5 2.5" fill="none" stroke="#c4c4c4" stroke-width="1.2"/><rect x="302.3" y="39" width="1" height="12" fill="#808080"/><circle cx="310.6" cy="41.6" r="1.2" fill="#14148c"/><path d="M308.6 43.6h3.2v5h1.3v1h-4.8v-1h1.3v-4h-1z" fill="#14148c"/><path d="M312.5 44h3v-2l3.8 2.7l-3.8 2.7v-2h-3z" fill="#d8c020" stroke="#a08010" stroke-width="0.5"/><rect x="325" y="40.3" width="8" height="1" fill="#8a8a8a"/><rect x="325" y="42.3" width="8" height="1" fill="#8a8a8a"/><rect x="325" y="44.3" width="5" height="1" fill="#8a8a8a"/><path d="M330 46.5h3.5v-1.5l3 2.5l-3 2.5v-1.5h-3.5z" fill="#f2f2f2" stroke="#a0a0a0" stroke-width="0.8"/><path d="M341 42h5v-1.5l3 2.5l-3 2.5v-1.5h-2l-2 2.5l2 2.5" fill="none" stroke="#c8c8c8" stroke-width="0.9"/><rect x="341" y="48.3" width="2" height="0.9" fill="#9a9a9a"/><rect x="349" y="48.3" width="2" height="0.9" fill="#9a9a9a"/><rect x="355.0" y="40.0" width="1.2" height="1.1" fill="#b8a48a" opacity="0.8"/><rect x="355.0" y="42.9" width="1.2" height="1.1" fill="#b8a48a" opacity="0.8"/><rect x="355.0" y="45.8" width="1.2" height="1.1" fill="#b8a48a" opacity="0.8"/><rect x="355.0" y="48.7" width="1.2" height="1.1" fill="#b8a48a" opacity="0.8"/><circle cx="365" cy="42" r="2" fill="#c8c8c8" stroke="#9a9a9a" stroke-width="0.7"/><path d="M365 44v3" stroke="#9a9a9a" stroke-width="1.2"/><path d="M360.5 47.5c0-1.5 2-2 4.5-2s4.5 0.5 4.5 2v1.2c0 1-2 1.5-4.5 1.5s-4.5-0.5-4.5-1.5z" fill="#e0e0e0" stroke="#8a8a8a" stroke-width="0.8"/><rect x="374.7" y="40.0" width="1.2" height="1.1" fill="#b8a48a" opacity="0.8"/><rect x="374.7" y="42.9" width="1.2" height="1.1" fill="#b8a48a" opacity="0.8"/><rect x="374.7" y="45.8" width="1.2" height="1.1" fill="#b8a48a" opacity="0.8"/><rect x="374.7" y="48.7" width="1.2" height="1.1" fill="#b8a48a" opacity="0.8"/><path d="M387.38 45.89L390.20 46.91M386.34 47.01L387.61 49.73M384.81 47.08L383.79 49.90M383.69 46.04L380.97 47.31M383.62 44.51L380.80 43.49M384.66 43.39L383.39 40.67M386.19 43.32L387.21 40.50M387.31 44.36L390.03 43.09" stroke="#4a9a7a" stroke-width="1.3" stroke-linecap="round"/><circle cx="385.5" cy="45.2" r="2.75" fill="#3a8c88"/><circle cx="385.7" cy="45.400000000000006" r="1.7000000000000002" fill="#c8e890"/><path d="M395 43.5h5.5l-2.75 2.7z" fill="#111"/><circle cx="411.2" cy="45.2" r="5.2" fill="#2e9a3e"/><circle cx="411.2" cy="45.2" r="4.2" fill="#3cac4a"/><path d="M409.5 42.3v6l4.5-3z" fill="#fff"/><path d="M421.5 43.5h5.5l-2.75 2.7z" fill="#111"/><circle cx="436" cy="43" r="4.2" fill="#2e9a3e"/><path d="M434.8 41v4l3-2z" fill="#fff"/><rect x="437" y="46" width="6.3" height="4.2" rx="1.8" fill="#e02030"/><path d="M448 43.5h5.5l-2.75 2.7z" fill="#111"/><rect x="456.5" y="40.0" width="1.2" height="1.1" fill="#b8a48a" opacity="0.8"/><rect x="456.5" y="42.9" width="1.2" height="1.1" fill="#b8a48a" opacity="0.8"/><rect x="456.5" y="45.8" width="1.2" height="1.1" fill="#b8a48a" opacity="0.8"/><rect x="456.5" y="48.7" width="1.2" height="1.1" fill="#b8a48a" opacity="0.8"/><circle cx="466" cy="42.5" r="2.8" fill="#7050c0"/><circle cx="470" cy="44" r="2.8" fill="#40a040"/><path d="M461.5 46l2-1.5h6l2.5 1.5l-2 4h-8.5z" fill="#f5cf70" stroke="#c08a30" stroke-width="0.8"/><path d="M479 49l7.5-7.5l2 2l-7.5 7.5z" fill="#e8c050" stroke="#b89030" stroke-width="0.7"/><path d="M481 47l2 2" stroke="#9090a0" stroke-width="2"/><path d="M478 50.5l1.8-1.8" stroke="#fff8a0" stroke-width="2"/><path d="M493 43.5h5.5l-2.75 2.7z" fill="#111"/><rect x="502.0" y="40.0" width="1.2" height="1.1" fill="#b8a48a" opacity="0.8"/><rect x="502.0" y="42.9" width="1.2" height="1.1" fill="#b8a48a" opacity="0.8"/><rect x="502.0" y="45.8" width="1.2" height="1.1" fill="#b8a48a" opacity="0.8"/><rect x="502.0" y="48.7" width="1.2" height="1.1" fill="#b8a48a" opacity="0.8"/><rect x="504.5" y="37" width="16.5" height="15" fill="#cde5f8" stroke="#a8d0f0" stroke-width="0.8"/><rect x="521.5" y="40.0" width="1.2" height="1.1" fill="#b8a48a" opacity="0.8"/><rect x="521.5" y="42.9" width="1.2" height="1.1" fill="#b8a48a" opacity="0.8"/><rect x="521.5" y="45.8" width="1.2" height="1.1" fill="#b8a48a" opacity="0.8"/><rect x="521.5" y="48.7" width="1.2" height="1.1" fill="#b8a48a" opacity="0.8"/><path d="M508 49.5c2-0.5 4-1.5 5.5-3.5l2.5-6l1.5 0.8l-1.5 6c-1.5 2-4 2.7-8 2.7z" fill="#f4d850" stroke="#c0a020" stroke-width="0.5"/><path d="M514 45l3-5" stroke="#8a8a80" stroke-width="1.6"/><path d="M507 50h5" stroke="#e8c840" stroke-width="0.8"/><path d="M528 43.5h1.5v-4h2v4h1.5l-2.5 3.5z" fill="#f8e080" stroke="#c89020" stroke-width="0.8"/><rect x="529.5" y="48.5" width="1.5" height="1.5" fill="#3060b0"/><rect x="535" y="40" width="2" height="10" fill="#d8dce0"/><path d="M542.5 43.5h5.5l-2.75 2.7z" fill="#111"/><path d="M554 47h1.5v3h2v-3h1.5l-2.5-3.5z" fill="#f8e080" stroke="#c89020" stroke-width="0.8"/><rect x="555.5" y="40" width="1.5" height="1.5" fill="#3060b0"/><rect x="561" y="40" width="2" height="10" fill="#d8dce0"/><path d="M569 43.5h5.5l-2.75 2.7z" fill="#111"/><path d="M579.5 45l4-3.5v2h5.5v3h-5.5v2z" fill="#fff4c0" stroke="#d09a20" stroke-width="1"/><rect x="578" y="42" width="1.3" height="3" fill="#3a5a9a"/><path d="M604.5 45l-4-3.5v2h-5.5v3h5.5v2z" fill="#fff4c0" stroke="#d09a20" stroke-width="1"/><rect x="604.8" y="42" width="1.3" height="3" fill="#3a5a9a"/><path d="M612.5 45l4.2-3.5v2h5v3h-5v2z" fill="#fff4c0" stroke="#d09a20" stroke-width="1"/><path d="M626.5 43.5h5.5l-2.75 2.7z" fill="#111"/><path d="M647.5 45l-4.2-3.5v2h-5v3h5v2z" fill="#f8f8f8" stroke="#c0c0c0" stroke-width="1"/><path d="M653.5 43.5h5.5l-2.75 2.7z" fill="#777"/><rect x="662.2" y="39" width="1" height="12" fill="#8a8a8a"/><rect x="668.5" y="42.5" width="10" height="7.5" fill="#eef6fc" stroke="#c8b070" stroke-width="0.9"/><rect x="668.5" y="42.5" width="8" height="1.8" fill="#3d86d0"/><path d="M674 46.5l4-4" stroke="#2a9a40" stroke-width="2"/><circle cx="678.3" cy="41.3" r="1.5" fill="#30a848"/><rect x="683.5" y="39" width="1" height="12" fill="#8a8a8a"/><circle cx="695.5" cy="45" r="5" fill="#1a6fb8"/><rect x="694.8" y="43.5" width="1.6" height="4.5" fill="#fff"/><circle cx="695.6" cy="41.8" r="0.9" fill="#fff"/><circle cx="906" cy="44.2" r="3.3" fill="none" stroke="#505050" stroke-width="1.3"/><path d="M908.5 46.8L912 50.3" stroke="#505050" stroke-width="1.5"/><rect x="923.5" y="40.0" width="1.2" height="1.1" fill="#b8a48a" opacity="0.8"/><rect x="923.5" y="42.9" width="1.2" height="1.1" fill="#b8a48a" opacity="0.8"/><rect x="923.5" y="45.8" width="1.2" height="1.1" fill="#b8a48a" opacity="0.8"/><rect x="923.5" y="48.7" width="1.2" height="1.1" fill="#b8a48a" opacity="0.8"/><rect x="929.5" y="42" width="8.5" height="7.5" fill="#eef4fa" stroke="#b09a60" stroke-width="0.9"/><path d="M929.5 45.5h8.5M933.5 42v7.5" stroke="#b09a60" stroke-width="0.8"/><rect x="929.5" y="42" width="5" height="1.6" fill="#3d86d0"/><path d="M936.5 39.5l2 2l-2 2l-2-2z" fill="#fff" stroke="#d0a030" stroke-width="0.9"/><rect x="943.5" y="39" width="1.4" height="12" fill="#a8a8a8"/><rect x="950.5" y="39.5" width="7.5" height="7" fill="#eef4fa" stroke="#a09060" stroke-width="0.8"/><rect x="950.5" y="39.5" width="7.5" height="1.6" fill="#3d86d0"/><rect x="954.5" y="44" width="6.5" height="6.5" fill="#dde8f4" stroke="#b09a60" stroke-width="0.8"/><text x="955.6" y="49.3" font-family="Liberation Sans" font-size="5.5" font-weight="bold" fill="#2a5aa0">c</text><rect x="966" y="39.5" width="11.5" height="11" fill="#2ea7e0"/><text x="967" y="47.5" font-family="Liberation Sans" font-weight="bold" font-size="5.6" fill="#fff">MX</text><rect x="979.5" y="37" width="16" height="14.5" fill="#cde5f8" stroke="#a8d0f0" stroke-width="0.8"/><path d="M989.88 45.19L992.70 46.21M988.84 46.31L990.11 49.03M987.31 46.38L986.29 49.20M986.19 45.34L983.47 46.61M986.12 43.81L983.30 42.79M987.16 42.69L985.89 39.97M988.69 42.62L989.71 39.80M989.81 43.66L992.53 42.39" stroke="#4a9a7a" stroke-width="1.3" stroke-linecap="round"/><circle cx="988" cy="44.5" r="2.75" fill="#3a8c88"/><circle cx="988.2" cy="44.7" r="1.7000000000000002" fill="#c8e890"/><path d="M11.88 65.19L14.70 66.21M10.84 66.31L12.11 69.03M9.31 66.38L8.29 69.20M8.19 65.34L5.47 66.61M8.12 63.81L5.30 62.79M9.16 62.69L7.89 59.97M10.69 62.62L11.71 59.80M11.81 63.66L14.53 62.39" stroke="#4a9a7a" stroke-width="1.3" stroke-linecap="round"/><circle cx="10" cy="64.5" r="2.75" fill="#3a8c88"/><circle cx="10.2" cy="64.7" r="1.7000000000000002" fill="#c8e890"/><path d="M48 61.3L54.7 68M54.7 61.3L48 68" stroke="#333" stroke-width="0.8"/><path d="M62.5 59h5l2 2v7h-7z" fill="#eef4fa" stroke="#d0b070" stroke-width="0.7"/><rect x="63.3" y="60" width="1" height="7" fill="#90b8e0"/><path d="M65 63.5h3l1 1h4.5v5h-8.5z" fill="#f8d068" stroke="#c89030" stroke-width="0.8"/><rect x="161.5" y="60.5" width="7" height="2.5" fill="#fff" stroke="#222" stroke-width="1"/><rect x="177.8" y="60.5" width="7" height="6.8" fill="#fff" stroke="#333" stroke-width="1"/><rect x="177.8" y="60.5" width="7" height="2" fill="#333"/><rect x="735.5" y="61.0" width="7" height="2.5" fill="#fff" stroke="#222" stroke-width="1"/><rect x="751.0" y="61.0" width="7" height="6.8" fill="#fff" stroke="#333" stroke-width="1"/><rect x="751.0" y="61.0" width="7" height="2" fill="#333"/><rect x="968.0" y="61.0" width="7" height="2.5" fill="#fff" stroke="#222" stroke-width="1"/><rect x="983.5" y="61.0" width="7" height="6.8" fill="#fff" stroke="#333" stroke-width="1"/><rect x="983.5" y="61.0" width="7" height="2" fill="#333"/><rect x="968.0" y="732.0" width="7" height="2.5" fill="#fff" stroke="#222" stroke-width="1"/><rect x="983.5" y="732.0" width="7" height="6.8" fill="#fff" stroke="#333" stroke-width="1"/><rect x="983.5" y="732.0" width="7" height="2" fill="#333"/><rect x="126.5" y="76" width="8.5" height="8.5" rx="1" fill="#dce8f6" stroke="#8ab0d8" stroke-width="0.8"/><rect x="128.5" y="79.6" width="5" height="1.4" fill="#3a78c0"/><path d="M142 76l8 8M150 76l-8 8" stroke="#b0b0b0" stroke-width="2.2"/><path d="M145 74.5l6 6" stroke="#c8c8c8" stroke-width="1.5"/><rect x="155.2" y="74.5" width="1" height="11.5" fill="#a0a0a0"/><circle cx="164.6" cy="76.6" r="1.2" fill="#14148c"/><path d="M162.6 78.6h3.2v5h1.3v1h-4.8v-1h1.3v-4h-1z" fill="#14148c"/><path d="M166 79.5h2.5v-1.8l3.5 2.5l-3.5 2.5v-1.8h-2.5z" fill="#d8c020" stroke="#a08010" stroke-width="0.5"/><circle cx="184" cy="77" r="1.3" fill="#fff" stroke="#888" stroke-width="0.7"/><circle cx="184" cy="80.5" r="1.3" fill="#fff" stroke="#888" stroke-width="0.7"/><circle cx="184" cy="84" r="1.3" fill="#fff" stroke="#888" stroke-width="0.7"/><path d="M6 93.3l2.8 2.8l2.8-2.8" fill="none" stroke="#333" stroke-width="1.3"/><rect x="14.5" y="88.5" width="11" height="11" fill="#2ea7e0"/><rect x="16.3" y="91.7" width="1.1" height="4.8" fill="#fff"/><path d="M18.4 92.25h1.3a1.85 1.85 0 0 1 0 3.6999999999999997h-1.3z" fill="none" stroke="#fff" stroke-width="1.1"/><path d="M24.1 92.25h-2.2v3.6999999999999997h2.2M21.9 94.10000000000001h1.9" fill="none" stroke="#fff" stroke-width="1.05"/><path d="M17 105.6l2.8 2.8l2.8-2.8" fill="none" stroke="#333" stroke-width="1.3"/><circle cx="29.5" cy="108" r="3" fill="#f0c040" stroke="#c08a20" stroke-width="0.7"/><circle cx="33.5" cy="104.5" r="3" fill="#f0c040" stroke="#c08a20" stroke-width="0.7"/><path d="M27 104c1-1.5 2.5-2 4-2M36 108.5c-1 1.5-2.5 2-4 2" fill="none" stroke="#3a70c0" stroke-width="0.9"/><circle cx="43" cy="117.2" r="3" fill="#f0c040" stroke="#a07010" stroke-width="0.8"/><circle cx="43" cy="117.2" r="1" fill="#a04010"/><path d="M37 119.5v5l4-2.5z" fill="#30a040"/><rect x="29" y="128.5" width="6" height="9.5" fill="#e8eef0" stroke="#909aa0" stroke-width="0.8"/><rect x="30" y="130.0" width="4" height="1.2" fill="#7a9a8a"/><path d="M26 133.5v5l4.5-2.5z" fill="#30a040"/><rect x="29" y="140.8" width="6" height="9.5" fill="#e8eef0" stroke="#909aa0" stroke-width="0.8"/><rect x="30" y="142.3" width="4" height="1.2" fill="#7a9a8a"/><path d="M26 145.8v5l4.5-2.5z" fill="#30a040"/><path d="M200.8 60.1h5l2.5 2.5v6.5h-7.5z" fill="#f6f8fa" stroke="#c0a060" stroke-width="0.8"/><text x="202.10000000000002" y="67.9" font-family="Liberation Sans" font-size="6.5" font-weight="bold" fill="#2a5aa0">c</text><path d="M259.5 60.1h5l2.5 2.5v6.5h-7.5z" fill="#f6f8fa" stroke="#c0a060" stroke-width="0.8"/><text x="260.8" y="67.9" font-family="Liberation Sans" font-size="6.5" font-weight="bold" fill="#2a5aa0">S</text><path d="M386.5 60.1h5l2.5 2.5v6.5h-7.5z" fill="#f6f8fa" stroke="#c0a060" stroke-width="0.8"/><text x="387.8" y="67.9" font-family="Liberation Sans" font-size="6.5" font-weight="bold" fill="#2a5aa0">c</text><path d="M498.3 60.1h5l2.5 2.5v6.5h-7.5z" fill="#f6f8fa" stroke="#c0a060" stroke-width="0.8"/><text x="499.6" y="67.9" font-family="Liberation Sans" font-size="6.5" font-weight="bold" fill="#2a5aa0">c</text><path d="M611.5 60.1h5l2.5 2.5v6.5h-7.5z" fill="#f6f8fa" stroke="#c0a060" stroke-width="0.8"/><text x="612.8" y="67.9" font-family="Liberation Sans" font-size="6.5" font-weight="bold" fill="#2a5aa0">h</text><path d="M481.3 61L487.5 67.3M487.5 61L481.3 67.3" stroke="#333" stroke-width="0.8"/><path d="M746.5 82l3-3l3 3" fill="none" stroke="#444" stroke-width="1.1"/><path d="M746.5 703.5l3 3l3-3" fill="none" stroke="#444" stroke-width="1.1"/><path d="M238.3 714.8l-2.8 2.8l2.8 2.8" fill="none" stroke="#aaa" stroke-width="1.1"/><path d="M736.8 714.8l2.8 2.8l-2.8 2.8" fill="none" stroke="#999" stroke-width="1.2"/><rect x="756.5" y="158.5" width="4.5" height="2.2" fill="none" stroke="#c8c8c8" stroke-width="0.6"/><rect x="756.5" y="194.5" width="4.5" height="2.2" fill="none" stroke="#c8c8c8" stroke-width="0.6"/><circle cx="775" cy="63" r="2.4" fill="#3a8ad0"/><circle cx="780" cy="66.5" r="2.4" fill="#3a8ad0"/><path d="M834 61.2L840.8 68M840.8 61.2L834 68" stroke="#333" stroke-width="0.8"/><circle cx="851.2" cy="63.8" r="1.7" fill="none" stroke="#3a80c0" stroke-width="1"/><circle cx="856.2" cy="63.8" r="1.7" fill="none" stroke="#3a80c0" stroke-width="1"/><path d="M852.5 61l1.2-2.2M857.5 61l1.5-2M850 67.3h1.2M853.3 67.3h1.2M856.6 67.3h1.2" stroke="#3a80c0" stroke-width="1"/><path d="M853.3 77.3l6.6 6.6M859.9 77.3l-6.6 6.6" stroke="#7c7c7c" stroke-width="2.3" stroke-linecap="round"/><path d="M868.3 77.3l6.6 6.6M874.9 77.3l-6.6 6.6" stroke="#8a8a8a" stroke-width="2.2" stroke-linecap="round"/><path d="M867.5 75.5l3 3M871 75.5l-2 2" stroke="#a8a8a8" stroke-width="1.2"/><circle cx="887" cy="80" r="2.8" fill="#f0c040" stroke="#c08a20" stroke-width="0.7"/><circle cx="890" cy="77.5" r="2.5" fill="#f0c040" stroke="#c08a20" stroke-width="0.7"/><path d="M884 78c1-2 3-3 5-3M893 82c-1 2-3 2.5-5 2.5" fill="none" stroke="#3a70c0" stroke-width="0.9"/><rect x="902" y="75.5" width="6.5" height="9" fill="#eef4fa" stroke="#a0a8b0" stroke-width="0.8"/><path d="M898.5 80h4v-2l3 2.7l-3 2.7v-2h-4z" fill="#f8d060" stroke="#c08a20" stroke-width="0.6"/><circle cx="921" cy="79.5" r="2" fill="none" stroke="#3a88c8" stroke-width="1.2"/><path d="M918 76.5l6 6.5" stroke="#888" stroke-width="0.8"/><rect x="929.8" y="74" width="1" height="12" fill="#a0a0a0"/><rect x="937.5" y="76" width="8.5" height="8.5" rx="1" fill="#dce8f6" stroke="#8ab0d8" stroke-width="0.8"/><path d="M939.5 80.3h4.5M941.8 78v4.6" stroke="#3a78c0" stroke-width="1.2"/><rect x="953.5" y="76" width="8.5" height="8.5" rx="1" fill="#dce8f6" stroke="#8ab0d8" stroke-width="0.8"/><rect x="955.5" y="79.6" width="4.5" height="1.4" fill="#3a78c0"/><path d="M969 78h6v-1.8l3 2.5l-3 2.5v-1.8h-6z" fill="#f8d060" stroke="#c08a20" stroke-width="0.7"/><path d="M978 82h-6v-1.8l-3 2.5l3 2.5v-1.8h6z" fill="#f8d060" stroke="#c08a20" stroke-width="0.7"/><circle cx="989.5" cy="77" r="1.3" fill="#fff" stroke="#888" stroke-width="0.7"/><circle cx="989.5" cy="80.5" r="1.3" fill="#fff" stroke="#888" stroke-width="0.7"/><circle cx="989.5" cy="84" r="1.3" fill="#fff" stroke="#888" stroke-width="0.7"/><rect x="783" y="90" width="9.3" height="9.3" fill="#fff" stroke="#333" stroke-width="0.9"/><path d="M785 94.5l2 2.2l3.5-4.5" fill="none" stroke="#222" stroke-width="1"/><circle cx="800.5" cy="93" r="2" fill="none" stroke="#2a70c0" stroke-width="1.3"/><path d="M799 94.5l-3.5 3.5" stroke="#2a70c0" stroke-width="1.4"/><rect x="200" y="731" width="8.5" height="6.5" rx="0.8" fill="#dde8f6" stroke="#2a5aa0" stroke-width="1.1"/><rect x="202" y="738.5" width="4.5" height="1.3" fill="#2a5aa0"/><path d="M248 732L255 739M255 732L248 739" stroke="#333" stroke-width="0.8"/><rect x="263" y="730.5" width="9" height="10" fill="#eef0f4" stroke="#a0a0b0" stroke-width="0.7"/><circle cx="265.8" cy="733.5" r="1.5" fill="#e03030"/><rect x="264.5" y="737" width="3" height="2.5" fill="#f0b030"/><circle cx="323.3" cy="735.5" r="4.8" fill="#3a80c8"/><path d="M321.8 732.5v6l4.2-3z" fill="#fff"/><rect x="383.5" y="730.5" width="8.5" height="7.5" fill="#dde8f6" stroke="#2a5a90" stroke-width="1"/><circle cx="390.5" cy="738.5" r="2.5" fill="#40a050"/><rect x="474" y="730.5" width="5" height="10" rx="1.6" fill="#e8f0fa" stroke="#3a70c0" stroke-width="1"/><path d="M522 739.5l7-7l2.5 2.5l-7 7z" fill="#f0d070" stroke="#b89030" stroke-width="0.7"/><path d="M521.5 741l2-2" stroke="#fff8a0" stroke-width="1.6"/><rect x="761" y="731.5" width="7.5" height="7.5" rx="1" fill="#e8303a"/><path d="M777 732l6.5 6.5M783.5 732L777 738.5" stroke="#a0a0a0" stroke-width="2"/><path d="M792.5 732l6.5 6.5M799 732l-6.5 6.5" stroke="#c8c8c8" stroke-width="2"/><path d="M794 730.5l5.5 5.5" stroke="#d8d8d8" stroke-width="1.2"/><rect x="806.5" y="729.5" width="1" height="12.0" fill="#9a9a9a"/><path d="M813.5 730.5h4.5l2 2v7h-6.5z" fill="#eef4fa" stroke="#90a0b0" stroke-width="0.7"/><path d="M818 737l3 3M821 737l-3 3" stroke="#555" stroke-width="0.9"/><rect x="831.5" y="730.5" width="9" height="9.5" fill="#eef4fa" stroke="#90a0b0" stroke-width="0.7"/><rect x="830" y="735.5" width="5" height="4.5" rx="0.5" fill="#e0b040"/><path d="M831 735.5v-1.5a1.5 1.5 0 0 1 3 0v1.5" fill="none" stroke="#a07010" stroke-width="0.8"/><rect x="846.5" y="730.5" width="8" height="9" fill="#eef4fa" stroke="#b09a60" stroke-width="0.7"/><path d="M850 737h4l1.5-2" fill="none" stroke="#d09020" stroke-width="1.4"/><rect x="859.5" y="728.5" width="15" height="14.5" fill="#cde5f8" stroke="#a8d0f0" stroke-width="0.8"/><rect x="875" y="728.5" width="15" height="14.5" fill="#cde5f8" stroke="#a8d0f0" stroke-width="0.8"/><path d="M863 732.5h8v5.5h-5.5l-2 2v-2h-0.5z" fill="#f4f8fc" stroke="#3a70b0" stroke-width="0.9"/><rect x="865" y="734.5" width="4" height="1" fill="#909090"/><path d="M878.5 732.5h8v5.5h-5.5l-2 2v-2h-0.5z" fill="#f4f8fc" stroke="#3a70b0" stroke-width="0.9"/><path d="M881.5 733.5l2.5 2.5M884 733.5l-2.5 2.5" stroke="#e03030" stroke-width="1"/><rect x="892.2" y="729.5" width="1" height="12.0" fill="#9a9a9a"/><rect x="898.5" y="733.5" width="9" height="6.5" fill="#eef6fc" stroke="#b09a60" stroke-width="0.8"/><rect x="898.5" y="733.5" width="7" height="1.6" fill="#3d86d0"/><path d="M903.5 736l3.5-3.5" stroke="#2a9a40" stroke-width="1.8"/><circle cx="907.3" cy="731.8" r="1.3" fill="#30a848"/><rect x="914.5" y="730.5" width="9" height="7" rx="0.8" fill="#dde8f6" stroke="#2a5aa0" stroke-width="1.1"/><rect x="916.5" y="738.5" width="5" height="1.5" fill="#2a5aa0"/><path d="M929.5 735h5.5l-2.75 2.7z" fill="#111"/><rect x="941.5" y="732" width="9" height="8.5" fill="#eef6fc" stroke="#c8b070" stroke-width="0.8"/><rect x="941.5" y="732" width="7" height="1.8" fill="#3d86d0"/><path d="M949.5 730.3l1.8 1.8l-1.8 1.8l-1.8-1.8z" fill="#fff" stroke="#c09a30" stroke-width="0.8"/><path d="M955.5 735h5.5l-2.75 2.7z" fill="#111"/><path d="M989 763l3-3l3 3" fill="none" stroke="#444" stroke-width="1.1"/><path d="M989 929.5l3 3l3-3" fill="none" stroke="#444" stroke-width="1.1"/><path d="M979.5 940l3 3l-3 3" fill="none" stroke="#aaa" stroke-width="1"/><path d="M203 940.3l-3 3l3 3" fill="none" stroke="#aaa" stroke-width="1"/><path d="M8.5 939.5l-3 3l3 3" fill="none" stroke="#444" stroke-width="1.1"/><path d="M183.5 939.5l3 3l-3 3" fill="none" stroke="#444" stroke-width="1.1"/><rect x="801.7" y="953.1" width="1.2" height="1.1" fill="#b0a090" opacity="0.8"/><rect x="801.7" y="956.0" width="1.2" height="1.1" fill="#b0a090" opacity="0.8"/><rect x="801.7" y="958.9" width="1.2" height="1.1" fill="#b0a090" opacity="0.8"/><rect x="801.7" y="961.8000000000001" width="1.2" height="1.1" fill="#b0a090" opacity="0.8"/><rect x="982.5" y="953" width="8" height="5" fill="#90c0a0" stroke="#6a9a70" stroke-width="0.6"/><circle cx="990" cy="961" r="2.6" fill="#e03040"/></svg>
<div style="position:absolute;left:0px;top:0px;width:999px;height:1px;background:#7a7a7a;"></div>
<div style="position:absolute;left:0px;top:0px;width:1px;height:968px;background:#787878;"></div>
<div style="position:absolute;left:998px;top:0px;width:1px;height:968px;background:#7c7c7c;"></div>
<div style="position:absolute;left:1px;top:966px;width:997px;height:1px;background:#fafafa;"></div>
<div style="position:absolute;left:0px;top:967px;width:999px;height:1px;background:#555555;"></div>
</body></html>
